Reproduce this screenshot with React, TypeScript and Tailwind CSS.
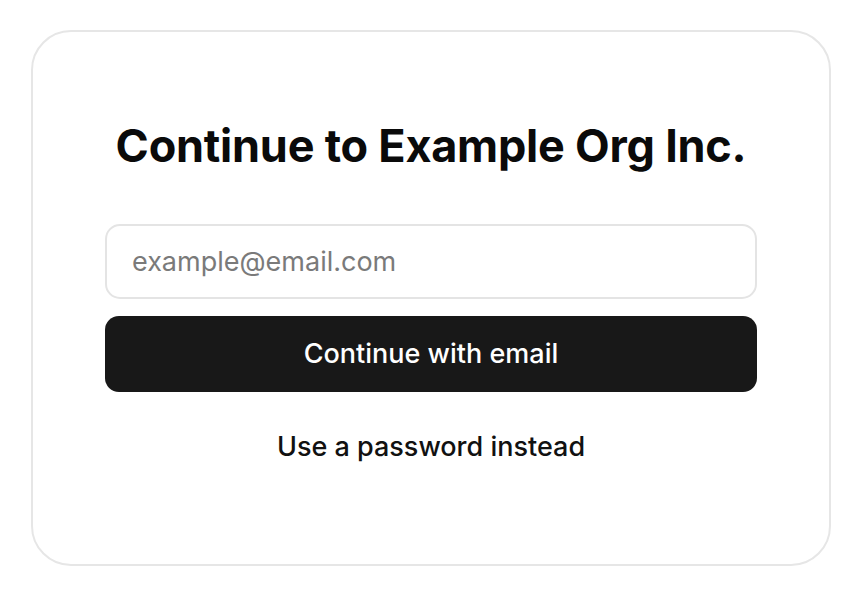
export default function App() {
  return (
    <div className="min-h-screen bg-white pt-[30px] pl-[31px] font-['Inter','Liberation_Sans',sans-serif]">
      <div className="w-[800px] h-[536px] rounded-[40px] border-2 border-[#e6e6e6] bg-white px-[72px] pt-[87px]">
        <h1 className="text-center text-[45px] leading-[54px] font-bold tracking-[-0.005em] text-[#0a0a0a]">
          Continue to Example Org Inc.
        </h1>

        <div className="mt-[51px] flex flex-col gap-[17px]">
          <input
            type="email"
            placeholder="example@email.com"
            className="h-[75px] w-full rounded-[15px] border-2 border-[#e4e4e4] px-[25px] text-[27px] text-[#111] placeholder:text-[#7a7a7a] outline-none"
          />
          <button className="h-[76px] w-full rounded-[14px] bg-[#181818] text-[27px] font-medium text-white">
            Continue with email
          </button>
        </div>

        <div className="mt-[37px] text-center">
          <button className="text-[27px] leading-[36px] font-medium text-[#111]">
            Use a password instead
          </button>
        </div>
      </div>
    </div>
  );
}
